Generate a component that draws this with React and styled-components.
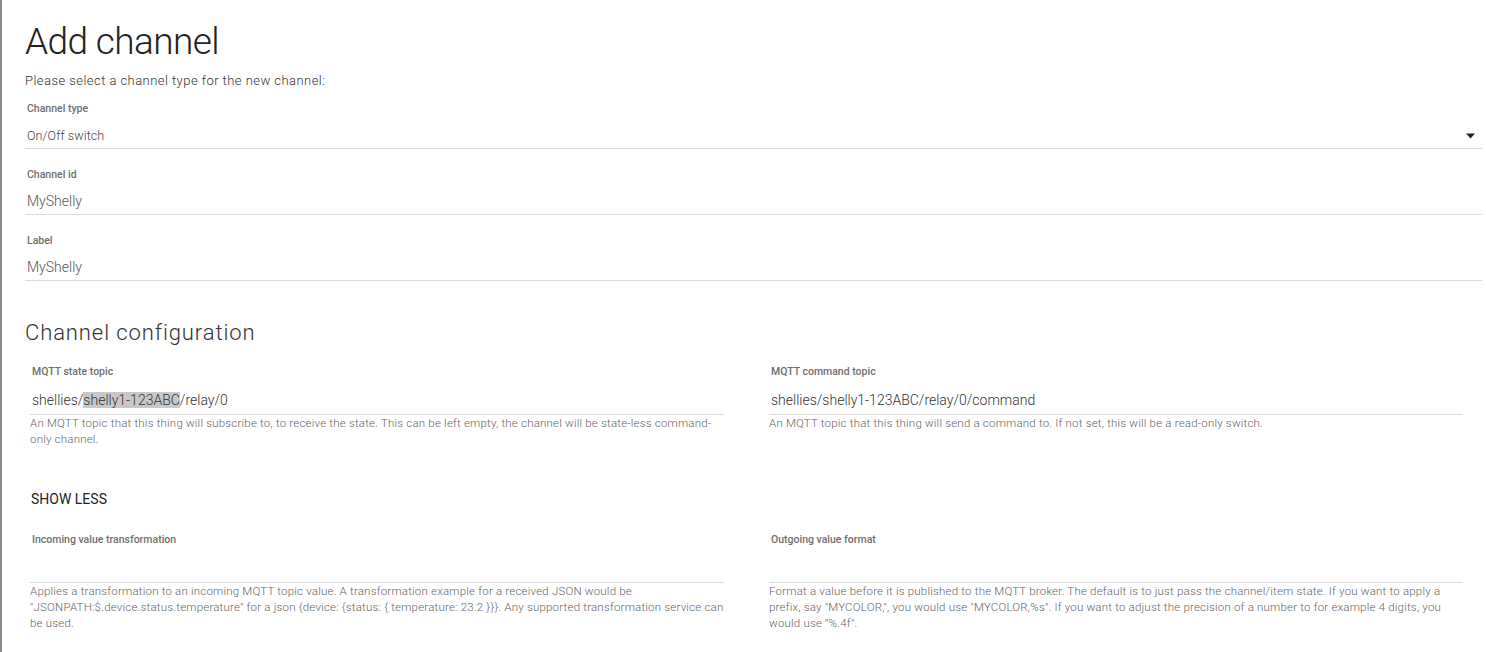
import React from 'react';
import styled, { createGlobalStyle } from 'styled-components';

const GlobalStyle = createGlobalStyle`
  html, body { margin: 0; padding: 0; background: #ffffff; overflow: hidden; }
  body { font-family: Roboto, "Liberation Sans", Arial, sans-serif; }
  * { box-sizing: border-box; }
`;

const Page = styled.div`
  height: 100vh;
  overflow: hidden;
  border-left: 2px solid #8a8a8a;
  padding: 20px 4px 0 23px;
  background: #fff;
`;

const Title = styled.h1`
  margin: 0;
  font-size: 37px;
  line-height: 44px;
  font-weight: 300;
  letter-spacing: -0.6px;
  color: #222;
`;

const Subtitle = styled.p`
  margin: 7.5px 0 0;
  font-size: 13px;
  line-height: 18px;
  font-weight: 300;
  letter-spacing: 0.45px;
  color: #333;
`;

const Fields = styled.div`
  display: flex;
  flex-direction: column;
  gap: 19px;
  margin-top: 12px;
`;

const Field = styled.div`
  display: flex;
  flex-direction: column;
`;

const FieldLabel = styled.div`
  font-size: 10.5px;
  line-height: 13px;
  font-weight: 500;
  color: #6e6e6e;
  padding-left: 2px;
`;

const paddings = {
  select: '11px 7px 2px 2px',
  compact: '10px 2px 3px 2px',
  config: '12px 2px 4px 2px',
};

const InputLine = styled.div`
  display: flex;
  align-items: center;
  justify-content: space-between;
  border-bottom: 1px solid #dcdcdc;
  padding: ${(p) => paddings[p.$variant]};
  min-height: ${(p) => (p.$variant === 'config' ? 37 : 34)}px;
`;

const Value = styled.span`
  font-size: ${(p) => (p.$small ? 12.5 : 14)}px;
  line-height: 20px;
  font-weight: 300;
  letter-spacing: ${(p) => (p.$small ? 0.1 : 0)}px;
  color: ${(p) => p.$color || '#555'};
  white-space: nowrap;
`;

const Selected = styled.span`
  background: #c8c8c8;
`;

const Arrow = styled.svg`
  width: 9px;
  height: 6px;
  display: block;
`;

const SectionTitle = styled.h2`
  margin: 38.5px 0 0;
  font-size: 22px;
  line-height: 28px;
  font-weight: 300;
  letter-spacing: 0.9px;
  color: #333;
`;

const Grid = styled.div`
  display: grid;
  grid-template-columns: 694px 694px;
  column-gap: 45px;
  align-items: start;
  margin-top: ${(p) => p.$top}px;
  padding-left: 5px;
`;

const Help = styled.div`
  font-size: 11.5px;
  line-height: 16px;
  font-weight: 300;
  letter-spacing: 0.2px;
  color: #666;
`;

const ShowLess = styled.button`
  display: block;
  margin: 42px 0 0 6px;
  padding: 0;
  border: 0;
  background: none;
  font-family: inherit;
  font-size: 14px;
  line-height: 20px;
  font-weight: 400;
  color: #222;
  text-transform: uppercase;
  cursor: pointer;
`;

const ConfigField = ({ label, value, help }) => (
  <Field>
    <FieldLabel>{label}</FieldLabel>
    <InputLine $variant="config">
      <Value $color="#333">{value}</Value>
    </InputLine>
    <Help>{help}</Help>
  </Field>
);

export default function App() {
  return (
    <>
      <GlobalStyle />
      <Page>
        <Title>Add channel</Title>
        <Subtitle>Please select a channel type for the new channel:</Subtitle>
        <Fields>
          <Field>
            <FieldLabel>Channel type</FieldLabel>
            <InputLine $variant="select">
              <Value $small $color="#444">On/Off switch</Value>
              <Arrow viewBox="0 0 9 6">
                <path d="M0 0.5 H9 L4.5 5.5 Z" fill="#222" />
              </Arrow>
            </InputLine>
          </Field>
          <Field>
            <FieldLabel>Channel id</FieldLabel>
            <InputLine $variant="compact">
              <Value>MyShelly</Value>
            </InputLine>
          </Field>
          <Field>
            <FieldLabel>Label</FieldLabel>
            <InputLine $variant="compact">
              <Value>MyShelly</Value>
            </InputLine>
          </Field>
        </Fields>

        <SectionTitle>Channel configuration</SectionTitle>
        <Grid $top={17.5}>
          <ConfigField
            label="MQTT state topic"
            value={<>shellies/<Selected>shelly1-123ABC</Selected>/relay/0</>}
            help="An MQTT topic that this thing will subscribe to, to receive the state. This can be left empty, the channel will be state-less command-only channel."
          />
          <ConfigField
            label="MQTT command topic"
            value="shellies/shelly1-123ABC/relay/0/command"
            help="An MQTT topic that this thing will send a command to. If not set, this will be a read-only switch."
          />
        </Grid>
        <ShowLess>Show less</ShowLess>
        <Grid $top={24.5}>
          <ConfigField
            label="Incoming value transformation"
            value=""
            help={'Applies a transformation to an incoming MQTT topic value. A transformation example for a received JSON would be "JSONPATH:$.device.status.temperature" for a json {device: {status: { temperature: 23.2 }}}. Any supported transformation service can be used.'}
          />
          <ConfigField
            label="Outgoing value format"
            value=""
            help={'Format a value before it is published to the MQTT broker. The default is to just pass the channel/item state. If you want to apply a prefix, say "MYCOLOR,", you would use "MYCOLOR,%s". If you want to adjust the precision of a number to for example 4 digits, you would use "%.4f".'}
          />
        </Grid>
      </Page>
    </>
  );
}
